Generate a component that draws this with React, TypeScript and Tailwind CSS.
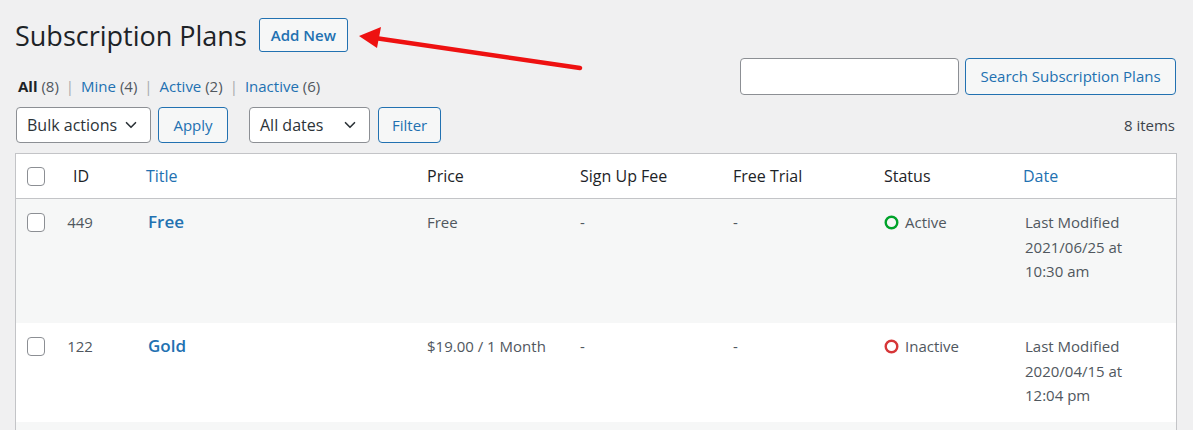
import { ChevronDown } from "lucide-react";

const font = { fontFamily: '"Open Sans", "Noto Sans", sans-serif' };

function Btn({ children, className = "" }: { children: React.ReactNode; className?: string }) {
  return (
    <button
      className={`h-[36px] px-[13px] border border-[#2271b1] bg-[#f6f7f7] text-[#2271b1] rounded-[4px] text-[15px] ${className}`}
    >
      {children}
    </button>
  );
}

function Select({ label, width }: { label: string; width: string }) {
  return (
    <div
      className={`h-[36px] ${width} flex items-center justify-between pl-[10px] pr-[10px] border border-[#8c8f94] bg-white rounded-[4px] text-[16px] text-[#2c3338]`}
    >
      <span>{label}</span>
      <ChevronDown size={18} strokeWidth={2.2} className="text-[#2c3338]" />
    </div>
  );
}

function Checkbox() {
  return <div className="w-[18px] h-[19px] border border-[#8c8f94] rounded-[4px] bg-white ml-[11px]" />;
}

function StatusDot({ color }: { color: string }) {
  return (
    <svg width="15" height="15" viewBox="0 0 15 15" className="shrink-0">
      <circle cx="7.5" cy="7.5" r="5.8" fill="none" stroke={color} strokeWidth="2.4" />
    </svg>
  );
}

const cols = "grid grid-cols-[40px_48px_313px_153px_153px_151px_139px_1fr]";

type Row = {
  id: string;
  title: string;
  price: string;
  active: boolean;
  date: string[];
  bg: string;
  h: string;
};

const rows: Row[] = [
  { id: "449", title: "Free", price: "Free", active: true, date: ["Last Modified", "2021/06/25 at", "10:30 am"], bg: "bg-[#f6f7f7]", h: "h-[124px]" },
  { id: "122", title: "Gold", price: "$19.00 / 1 Month", active: false, date: ["Last Modified", "2020/04/15 at", "12:04 pm"], bg: "bg-white", h: "h-[99px]" },
  { id: "", title: "", price: "", active: true, date: [], bg: "bg-[#f6f7f7]", h: "h-[60px]" },
];

export default function App() {
  return (
    <div className="w-[1193px] h-[430px] overflow-hidden bg-[#f0f0f1] relative" style={font}>
      {/* Heading */}
      <div className="flex items-center pl-[15px] pt-[18px] h-[34px] box-content">
        <h1 className="text-[27px] text-[#1d2327] leading-none">Subscription Plans</h1>
        <button className="ml-[12px] h-[34px] px-[11px] border border-[#2271b1] bg-[#f6f7f7] text-[#2271b1] rounded-[3px] text-[15px] font-semibold">
          Add New
        </button>
      </div>

      {/* Arrow */}
      <svg className="absolute left-[355px] top-[25px]" width="235" height="55" viewBox="0 0 235 55">
        <line x1="225" y1="43" x2="20" y2="13" stroke="#ee1111" strokeWidth="4.5" strokeLinecap="round" />
        <polygon points="4,11 26,2 22,23" fill="#ee1111" />
      </svg>

      {/* Views + search */}
      <div className="flex items-start justify-between pl-[18px] pr-[17px]">
        <div className="pt-[24px] leading-[20px] text-[15px] text-[#50575e] flex items-center gap-[7px]">
          <span>
            <span className="font-bold text-[#1d2327]">All</span> (8)
          </span>
          <span className="text-[#a7aaad]">|</span>
          <span>
            <span className="text-[#2271b1]">Mine</span> (4)
          </span>
          <span className="text-[#a7aaad]">|</span>
          <span>
            <span className="text-[#2271b1]">Active</span> (2)
          </span>
          <span className="text-[#a7aaad]">|</span>
          <span>
            <span className="text-[#2271b1]">Inactive</span> (6)
          </span>
        </div>
        <div className="flex items-center gap-[6px] pt-[6px]">
          <div className="w-[219px] h-[37px] bg-white border border-[#8c8f94] rounded-[4px]" />
          <Btn className="h-[37px] w-[211px] px-0">Search Subscription Plans</Btn>
        </div>
      </div>

      {/* Tablenav */}
      <div className="flex items-center pl-[16px] pr-[18px] mt-[11px] h-[36px]">
        <Select label="Bulk actions" width="w-[135px]" />
        <Btn className="ml-[7px] w-[70px]">Apply</Btn>
        <div className="ml-[21px]">
          <Select label="All dates" width="w-[121px]" />
        </div>
        <Btn className="ml-[8px] w-[63px]">Filter</Btn>
        <span className="ml-auto text-[15px] text-[#3c434a]">8 items</span>
      </div>

      {/* Table */}
      <div className="mx-[15px] mt-[10px] border border-[#c3c4c7] bg-white w-[1162px]">
        <div className={`${cols} h-[45px] items-center border-b border-[#c3c4c7] text-[16px] text-[#1d2327]`}>
          <Checkbox />
          <span className="text-center pl-[2px]">ID</span>
          <span className="pl-[42px] text-[#2271b1]">Title</span>
          <span className="pl-[10px]">Price</span>
          <span className="pl-[10px]">Sign Up Fee</span>
          <span className="pl-[10px]">Free Trial</span>
          <span className="pl-[10px]">Status</span>
          <span className="pl-[10px] text-[#2271b1]">Date</span>
        </div>
        {rows.map((r, i) => (
          <div key={i} className={`${cols} ${r.bg} ${r.h} text-[15px] text-[#50575e] leading-[24.5px] pt-[11px]`}>
            {r.id ? (
              <>
                <div className="pt-[3px]">
                  <Checkbox />
                </div>
                <span className="text-center">{r.id}</span>
                <span className="pl-[44px] text-[#2271b1] font-semibold text-[17px]">{r.title}</span>
                <span className="pl-[10px]">{r.price}</span>
                <span className="pl-[10px]">-</span>
                <span className="pl-[10px]">-</span>
                <span className="pl-[10px] flex items-center gap-[6px] h-[24.5px]">
                  <StatusDot color={r.active ? "#00a32a" : "#d63638"} />
                  {r.active ? "Active" : "Inactive"}
                </span>
                <span className="pl-[12px]">
                  {r.date.map((d) => (
                    <div key={d}>{d}</div>
                  ))}
                </span>
              </>
            ) : null}
          </div>
        ))}
      </div>
    </div>
  );
}
